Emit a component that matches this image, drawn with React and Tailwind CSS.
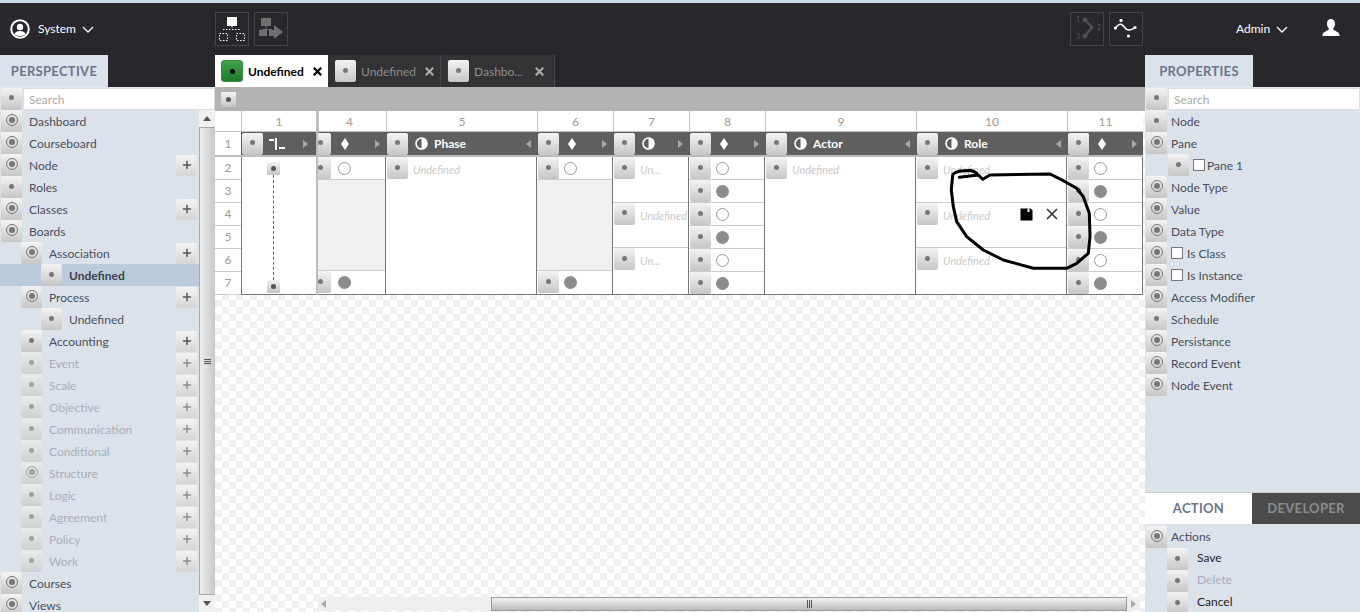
import { Plus } from "lucide-react";

const FONT = "font-['Lato','Noto_Sans',sans-serif]";

// small square button used all over the page
function Btn({ ring, small, green, className = "" }) {
  if (green) {
    return (
      <div className={`flex h-[22px] w-[22px] shrink-0 items-center justify-center rounded-[3px] border border-[#3c8a44] bg-gradient-to-b from-[#3fa34d] to-[#1f7a2e] ${className}`}>
        <div className="h-[5px] w-[5px] rounded-full bg-black" />
      </div>
    );
  }
  if (small) {
    return (
      <div className={`flex h-[13px] w-[13px] shrink-0 items-center justify-center rounded-[1px] bg-gradient-to-b from-[#f2f2f2] to-[#c4c4c4] ${className}`}>
        <div className="h-[5px] w-[5px] rounded-full bg-[#555]" />
      </div>
    );
  }
  return (
    <div className={`flex h-[22px] w-[21px] shrink-0 items-center justify-center rounded-[2px] bg-gradient-to-b from-[#f4f4f4] to-[#c6c6c6] ${className}`}>
      {ring ? (
        <div className="flex h-[12px] w-[12px] -translate-y-[1px] items-center justify-center rounded-full border border-[#777]">
          <div className="h-[6px] w-[6px] rounded-full bg-[#777]" />
        </div>
      ) : (
        <div className="h-[5px] w-[5px] -translate-y-[1px] rounded-full bg-[#777]" />
      )}
    </div>
  );
}

const perspective = [
  { label: "Dashboard", ring: true, level: 0 },
  { label: "Courseboard", ring: true, level: 0 },
  { label: "Node", ring: true, level: 0, plus: true },
  { label: "Roles", level: 0 },
  { label: "Classes", ring: true, level: 0, plus: true },
  { label: "Boards", ring: true, level: 0 },
  { label: "Association", ring: true, level: 1, plus: true },
  { label: "Undefined", level: 2, selected: true },
  { label: "Process", ring: true, level: 1, plus: true },
  { label: "Undefined", level: 2 },
  { label: "Accounting", level: 1, plus: true },
  { label: "Event", level: 1, plus: true, off: true },
  { label: "Scale", level: 1, plus: true, off: true },
  { label: "Objective", level: 1, plus: true, off: true },
  { label: "Communication", level: 1, plus: true, off: true },
  { label: "Conditional", level: 1, plus: true, off: true },
  { label: "Structure", ring: true, level: 1, plus: true, off: true },
  { label: "Logic", level: 1, plus: true, off: true },
  { label: "Agreement", level: 1, plus: true, off: true },
  { label: "Policy", level: 1, plus: true, off: true },
  { label: "Work", level: 1, plus: true, off: true },
  { label: "Courses", ring: true, level: 0 },
  { label: "Views", ring: true, level: 0 },
];

const properties = [
  { label: "Node" },
  { label: "Pane", ring: true },
  { label: "Pane 1", sub: true, check: true },
  { label: "Node Type", ring: true },
  { label: "Value", ring: true },
  { label: "Data Type", ring: true },
  { label: "Is Class", ring: true, check: true },
  { label: "Is Instance", ring: true, check: true },
  { label: "Access Modifier", ring: true },
  { label: "Schedule" },
  { label: "Persistance", ring: true },
  { label: "Record Event", ring: true },
  { label: "Node Event", ring: true },
];

const toggles = [
  { kind: "open", span: 1 },
  { kind: "filled", span: 1 },
  { kind: "open", span: 1 },
  { kind: "filled", span: 1 },
  { kind: "open", span: 1 },
  { kind: "filled", span: 1 },
];

const gapped = [
  { kind: "open", span: 1 },
  { kind: "grey", span: 4 },
  { kind: "filled", span: 1 },
];

const columns = [
  { n: "4", w: "w-[68px]", head: "diamond", cells: gapped, clip: true },
  { n: "5", w: "w-[151px]", head: "half", title: "Phase", cells: [{ kind: "text", span: 6, text: "Undefined" }] },
  { n: "6", w: "w-[76px]", head: "diamond", cells: gapped },
  {
    n: "7",
    w: "w-[76px]",
    head: "half",
    cells: [
      { kind: "text", span: 2, text: "Un..." },
      { kind: "text", span: 2, text: "Undefined" },
      { kind: "text", span: 2, text: "Un..." },
    ],
  },
  { n: "8", w: "w-[76px]", head: "diamond", cells: toggles },
  { n: "9", w: "w-[151px]", head: "half", title: "Actor", cells: [{ kind: "text", span: 6, text: "Undefined" }] },
  {
    n: "10",
    w: "w-[151px]",
    head: "half",
    title: "Role",
    cells: [
      { kind: "text", span: 2, text: "Undefined" },
      { kind: "text", span: 2, text: "Undefined", tools: true },
      { kind: "text", span: 2, text: "Undefined" },
    ],
  },
  { n: "11", w: "w-[76px]", head: "diamond", cells: toggles },
];

function Diamond() {
  return (
    <svg width="8" height="12" viewBox="0 0 8 12" className="shrink-0">
      <path d="M4 0 L8 6 L4 12 L0 6 Z" fill="#fff" />
    </svg>
  );
}

function HalfCircle() {
  return (
    <svg width="13" height="13" viewBox="0 0 13 13" className="shrink-0">
      <circle cx="6.5" cy="6.5" r="5.5" fill="#5f5f5f" stroke="#fff" strokeWidth="1.6" />
      <path d="M6.5 1 A5.5 5.5 0 0 1 6.5 12 Z" fill="#fff" />
    </svg>
  );
}

function Arrow({ left }) {
  return (
    <svg width="5" height="8" viewBox="0 0 5 8" className="shrink-0">
      <path d={left ? "M5 0 V8 L0 4 Z" : "M0 0 V8 L5 4 Z"} fill="#a8a8a8" />
    </svg>
  );
}

function SaveIcon() {
  return (
    <svg width="13" height="13" viewBox="0 0 13 13" className="shrink-0">
      <path d="M0.5 0.5 H10.5 L12.5 2.5 V12.5 H0.5 Z" fill="#000" />
      <rect x="7.5" y="0.5" width="2" height="3.5" fill="#fff" />
    </svg>
  );
}

function CloseIcon({ size = 12, weight = 1.6, className = "" }) {
  return (
    <svg width={size} height={size} viewBox="0 0 12 12" className={`shrink-0 ${className}`}>
      <path d="M1 1 L11 11 M11 1 L1 11" stroke="currentColor" strokeWidth={weight} fill="none" />
    </svg>
  );
}

function Cell({ cell, clip, last }) {
  const h = { 1: "h-[23px]", 2: "h-[46px]", 4: "h-[92px]", 6: "h-[138px]" }[cell.span];
  if (cell.kind === "grey") {
    return <div className={`${h} border-b border-[#ccc] bg-[#f0f0f0]`} />;
  }
  if (cell.kind === "text") {
    return (
      <div className={`${h} flex items-start ${last ? "" : "border-b border-[#ccc]"}`}>
        <Btn className="ml-[1px]" />
        <span className="ml-[5px] mt-[4px] text-[11px] italic leading-[18px] text-[#c9c9c9]">{cell.text}</span>
        {cell.tools && (
          <div className="ml-auto mr-[8px] mt-[5px] flex items-center gap-[13px]">
            <SaveIcon />
            <CloseIcon className="text-[#333]" />
          </div>
        )}
      </div>
    );
  }
  return (
    <div className={`${h} flex items-start ${last ? "" : "border-b border-[#ccc]"}`}>
      <Btn className={clip ? "-ml-[8px]" : "ml-[1px]"} />
      <div className={`${clip ? "ml-[7px]" : "ml-[5px]"} mt-[5px] h-[13px] w-[13px] rounded-full ${cell.kind === "open" ? "border border-[#999] bg-white" : "bg-[#8c8c8c]"}`} />
    </div>
  );
}

function Column({ col }) {
  const iconGap = col.head !== "diamond" ? "ml-[7px]" : col.clip ? "ml-[10px]" : "ml-[9px]";
  return (
    <div className={`${col.w} flex shrink-0 flex-col overflow-hidden`}>
      <div className={`flex h-[21px] items-center justify-center border-b border-l border-[#c4c4c4] bg-white pt-[2px] text-[12px] text-[#a09a90] ${col.clip ? "pr-[6px]" : ""}`}>
        {col.n}
      </div>
      <div className="flex h-[23px] items-center bg-[#5f5f5f] pr-[6px]">
        <Btn className={col.clip ? "-ml-[8px]" : "ml-[1px]"} />
        <div className={`flex items-center ${iconGap}`}>
          {col.head === "diamond" ? <Diamond /> : <HalfCircle />}
        </div>
        {col.title && <span className="ml-[6px] text-[12px] font-bold text-white">{col.title}</span>}
        <div className="ml-auto">
          <Arrow left={col.head === "half" && col.n !== "7"} />
        </div>
      </div>
      <div className="h-[2px] bg-[#bdbdbd]" />
      <div className="flex h-[138px] flex-col border-r border-b border-[#777] bg-white">
        {col.cells.map((c, i) => (
          <Cell key={i} cell={c} clip={col.clip} last={i === col.cells.length - 1} />
        ))}
      </div>
    </div>
  );
}

function SideRow({ item }) {
  const pad = { 0: "pl-[1px]", 1: "pl-[21px]", 2: "pl-[41px]" }[item.level];
  return (
    <div className={`flex h-[22px] items-center ${pad} pr-[2px] ${item.selected ? "bg-[#bccbdb]" : ""}`}>
      <Btn ring={item.ring} className={item.off ? "opacity-60" : ""} />
      <span className={`ml-[7px] pt-[2px] text-[12px] ${item.selected ? "font-bold text-[#3a3f4a]" : item.off ? "text-[#a9afb8]" : "text-[#4a4f5c]"}`}>
        {item.label}
      </span>
      {item.plus && (
        <div className="ml-auto flex h-[21px] w-[21px] items-center justify-center rounded-[2px] bg-gradient-to-b from-[#f4f4f4] to-[#d4d4d4]">
          <Plus size={12} strokeWidth={3} className={item.off ? "text-[#8a8f96]" : "text-[#555]"} />
        </div>
      )}
    </div>
  );
}

function PropRow({ item }) {
  return (
    <div className={`flex h-[22px] items-center ${item.sub ? "pl-[23px]" : "pl-[1px]"}`}>
      <Btn ring={item.ring} />
      {item.check && <div className="ml-[4px] h-[12px] w-[12px] border border-[#777] bg-white" />}
      <span className={`${item.check ? (item.sub ? "ml-[2px]" : "ml-[4px]") : "ml-[4px]"} pt-[2px] text-[12px] text-[#4a4f5c]`}>
        {item.label}
      </span>
    </div>
  );
}

function SearchRow() {
  return (
    <div className="flex h-[23px] items-center bg-[#e4e8ee] pl-[1px]">
      <Btn />
      <div className="ml-[1px] flex h-[22px] flex-1 items-center border border-[#ddd] bg-white pl-[5px] pt-[3px] text-[12px] text-[#aaa]">
        Search
      </div>
    </div>
  );
}

function OrgIcon() {
  return (
    <svg width="26" height="24" viewBox="0 0 26 24">
      <rect x="8" y="0" width="10" height="9" fill="#fff" />
      <path d="M13 9 V12 M4 12.5 H22" stroke="#fff" strokeDasharray="1.5 1.5" fill="none" />
      <rect x="0.5" y="16.5" width="8" height="7" fill="none" stroke="#fff" strokeDasharray="1.5 1.5" />
      <rect x="17.5" y="16.5" width="8" height="7" fill="none" stroke="#fff" strokeDasharray="1.5 1.5" />
    </svg>
  );
}

function FlowIcon() {
  return (
    <svg width="24" height="22" viewBox="0 0 24 22">
      <rect x="2" y="0" width="10" height="8" fill="#6f6f6f" />
      <path d="M7 8 V12 M3 11.5 H13" stroke="#6f6f6f" fill="none" />
      <rect x="0" y="12" width="8" height="6" fill="#6f6f6f" />
      <rect x="10" y="12" width="5" height="6" fill="#6f6f6f" />
      <path d="M15 7 L24 14 L15 21 Z" fill="#6f6f6f" />
    </svg>
  );
}

function NumberedIcon() {
  return (
    <svg width="30" height="28" viewBox="0 0 30 28">
      <path d="M13 5 L20 12 L13 21" stroke="#4e4e54" strokeWidth="2.5" fill="none" />
      <circle cx="13" cy="5" r="2.5" fill="#4e4e54" />
      <circle cx="13" cy="21" r="2.5" fill="#4e4e54" />
      <text x="4" y="7" fontSize="7" fill="#56565c">1</text>
      <text x="25" y="15" fontSize="7" fill="#56565c">2</text>
      <text x="4" y="24" fontSize="7" fill="#56565c">3</text>
    </svg>
  );
}

function WaveIcon() {
  return (
    <svg width="24" height="20" viewBox="0 0 24 20">
      <path d="M1.5 9 Q5 4.5 7.5 5.5 Q10 7 12 10 Q16 12.5 21 8.5" stroke="#fff" strokeWidth="1.5" fill="none" />
      <circle cx="1.5" cy="9" r="1.6" fill="#fff" />
      <circle cx="7" cy="1.5" r="1.6" fill="#fff" />
      <circle cx="21" cy="8.5" r="1.6" fill="#fff" />
      <circle cx="14.5" cy="17" r="1.6" fill="#fff" />
    </svg>
  );
}

function Chevron() {
  return (
    <svg width="12" height="7" viewBox="0 0 12 7">
      <path d="M1 1 L6 6 L11 1" stroke="#fff" strokeWidth="1.3" fill="none" />
    </svg>
  );
}

function ToolBox({ children }) {
  return <div className="flex h-[34px] w-[34px] items-center justify-center border border-[#444449]">{children}</div>;
}

function Tab({ active, label, w, xr }) {
  return (
    <div className={`${w} flex h-[32px] shrink-0 items-center ${active ? "bg-white pl-[6px]" : "border-r border-[#47474b] bg-[#333336] pl-[7px]"}`}>
      <Btn green={active} />
      <span className={`ml-[5px] pt-[2px] text-[12px] ${active ? "font-bold text-black" : "text-[#8c8c8c]"}`}>{label}</span>
      <CloseIcon size={9} weight={3} className={`ml-auto ${xr} ${active ? "text-black" : "text-[#aaa]"}`} />
    </div>
  );
}

export default function App() {
  return (
    <div className={`flex h-[612px] w-[1360px] flex-col overflow-hidden bg-[#28272c] ${FONT}`}>
      <div className="h-[3px] bg-[#c9dcec]" />

      {/* top bar */}
      <div className="flex h-[52px] items-center">
        <div className="flex w-[215px] items-center pl-[10px]">
          <svg width="20" height="20" viewBox="0 0 20 20">
            <circle cx="10" cy="10" r="8.8" stroke="#fff" strokeWidth="2" fill="none" />
            <circle cx="10" cy="8" r="3.2" fill="#fff" />
            <path d="M4.5 15.5 Q5 12 10 12 Q15 12 15.5 15.5 Q10 18.5 4.5 15.5 Z" fill="#fff" />
          </svg>
          <span className="ml-[8px] text-[12px] text-white">System</span>
          <div className="ml-[6px]"><Chevron /></div>
        </div>
        <div className="flex gap-[5px]">
          <ToolBox><OrgIcon /></ToolBox>
          <ToolBox><FlowIcon /></ToolBox>
        </div>
        <div className="ml-auto flex gap-[5px]">
          <ToolBox><NumberedIcon /></ToolBox>
          <ToolBox><WaveIcon /></ToolBox>
        </div>
        <div className="flex w-[217px] items-center pl-[93px]">
          <span className="text-[12px] text-white">Admin</span>
          <div className="ml-[6px]"><Chevron /></div>
          <svg width="18" height="18" viewBox="0 0 18 18" className="ml-auto mr-[20px] -translate-y-[1px]">
            <path d="M9 0 C6 0 5 2.5 5 5 C5 7.5 6.5 9 7 10 C6 12 1 12.5 0.5 15.5 L0.5 17 H17.5 V15.5 C17 12.5 12 12 11 10 C11.5 9 13 7.5 13 5 C13 2.5 12 0 9 0 Z" fill="#fff" />
          </svg>
        </div>
      </div>

      <div className="flex min-h-0 flex-1">
        {/* left panel */}
        <div className="flex w-[215px] shrink-0 flex-col">
          <div className="h-[32px] shrink-0">
            <div className="flex h-full w-[108px] items-center justify-center bg-[#dbe2ea] pt-[2px] text-[13px] font-bold tracking-[0.3px] text-[#6b7789]">
              PERSPECTIVE
            </div>
          </div>
          <SearchRow />
          <div className="flex min-h-0 flex-1 overflow-hidden">
            <div className="w-[199px] shrink-0 overflow-hidden bg-[#dbe2ea]">
              {perspective.map((p, i) => (
                <SideRow key={i} item={p} />
              ))}
            </div>
            <div className="flex w-[16px] shrink-0 flex-col items-center bg-[#f1f1f1]">
              <div className="flex h-[17px] items-center justify-center">
                <svg width="8" height="5" viewBox="0 0 8 5"><path d="M0 5 L4 0 L8 5 Z" fill="#555" /></svg>
              </div>
              <div className="flex w-full flex-1 items-center justify-center border-y border-l border-[#aaa] bg-gradient-to-r from-[#eeeeee] to-[#c8c8c8]">
                <div className="flex flex-col gap-[1px]">
                  <div className="h-px w-[7px] bg-[#555]" />
                  <div className="h-px w-[7px] bg-[#555]" />
                  <div className="h-px w-[7px] bg-[#555]" />
                </div>
              </div>
              <div className="flex h-[17px] items-center justify-center">
                <svg width="8" height="5" viewBox="0 0 8 5"><path d="M0 0 L4 5 L8 0 Z" fill="#555" /></svg>
              </div>
            </div>
          </div>
        </div>

        {/* centre */}
        <div className="flex min-w-0 flex-1 flex-col">
          <div className="flex h-[32px] shrink-0">
            <Tab active label="Undefined" w="w-[113px]" xr="mr-[6px]" />
            <Tab label="Undefined" w="w-[113px]" xr="mr-[6px]" />
            <Tab label="Dashbo..." w="w-[114px]" xr="mr-[10px]" />
          </div>
          <div className="flex h-[24px] shrink-0 items-center bg-[#b3b3b3] pl-[6px]">
            <Btn small className="h-[15px] w-[15px]" />
          </div>
          <div className="flex min-h-0 flex-1 flex-col bg-[repeating-conic-gradient(#f0f0f0_0_25%,#ffffff_0_50%)] bg-[length:14px_14px]">
            <div className="relative flex w-[928px] shrink-0">
              {/* row numbers */}
              <div className="flex w-[26px] shrink-0 flex-col bg-white text-[12px] text-[#a09a90]">
                <div className="h-[21px] border-b border-[#c4c4c4]" />
                <div className="flex h-[23px] items-center justify-center">1</div>
                <div className="h-[2px] bg-[#bdbdbd]" />
                {["2", "3", "4", "5", "6", "7"].map((n) => (
                  <div key={n} className="flex h-[23px] items-center justify-center border-b border-[#ccc]">
                    {n}
                  </div>
                ))}
              </div>

              {/* column 1, the tree */}
              <div className="flex w-[77px] shrink-0 flex-col border-r-2 border-[#bdbdbd]">
                <div className="flex h-[21px] items-center justify-center border-b border-l border-[#c4c4c4] bg-white pt-[2px] text-[12px] text-[#a09a90]">
                  1
                </div>
                <div className="flex h-[23px] items-center bg-[#5f5f5f] pr-[8px]">
                  <Btn className="ml-[1px]" />
                  <svg width="17" height="12" viewBox="0 0 17 12" className="ml-[6px]">
                    <rect x="0" y="1" width="5" height="2" fill="#fff" />
                    <rect x="6" y="0" width="2" height="12" fill="#fff" />
                    <rect x="10" y="9" width="6" height="2" fill="#fff" />
                  </svg>
                  <div className="ml-auto"><Arrow /></div>
                </div>
                <div className="h-[2px] bg-[#bdbdbd]" />
                <div className="flex h-[138px] flex-col items-start border-b border-l border-[#777] bg-white pb-[1px] pl-[25px] pt-[5px]">
                  <Btn small />
                  <div className="ml-[6px] flex-1 border-l border-dashed border-[#666]" />
                  <Btn small />
                </div>
              </div>

              {columns.map((c) => (
                <Column key={c.n} col={c} />
              ))}

              {/* hand drawn circle on top of the table */}
              <svg width="150" height="110" viewBox="945 166 150 110" className="pointer-events-none absolute left-[730px] top-[55px]">
                <path
                  d="M959.3 177.3 L978.3 175 L982.7 179.3 M978 175 Q975 171 970 170.5 L960 171 Q953 173 952.7 175 L951.3 190 L953.3 206.7 L956.7 221.7 L966.7 236.7 L983.3 250 L1003.3 260 L1033.3 268.3 L1066.7 268.3 L1076.7 263.3 L1088.3 253.3 L1090 236.7 L1089.3 213.3 L1083.3 196.7 L1076.7 188.3 L1063.3 180.7 L1050 174 L990 175 L982.7 179.3"
                  fill="none"
                  stroke="#000"
                  strokeWidth="3"
                  strokeLinejoin="round"
                  strokeLinecap="round"
                />
              </svg>
            </div>

            {/* horizontal scrollbar */}
            <div className="ml-[103px] mr-[5px] mt-auto mb-[1px] flex h-[14px] items-stretch bg-[#eeeeee]">
              <div className="flex w-[10px] items-center justify-center">
                <Arrow left />
              </div>
              <div className="w-[163px]" />
              <div className="flex w-[636px] items-center justify-center border border-[#999] bg-gradient-to-b from-[#f2f2f2] to-[#bcbcbc]">
                <div className="flex gap-[1px]">
                  <div className="h-[8px] w-px bg-[#555]" />
                  <div className="h-[8px] w-px bg-[#555]" />
                  <div className="h-[8px] w-px bg-[#555]" />
                </div>
              </div>
              <div className="flex flex-1 items-center justify-center">
                <Arrow />
              </div>
            </div>
          </div>
        </div>

        {/* right panel */}
        <div className="flex w-[215px] shrink-0 flex-col">
          <div className="h-[32px] shrink-0">
            <div className="flex h-full w-[108px] items-center justify-center bg-[#dbe2ea] pt-[2px] text-[13px] font-bold tracking-[0.3px] text-[#6b7789]">
              PROPERTIES
            </div>
          </div>
          <SearchRow />
          <div className="flex h-[382px] shrink-0 flex-col bg-[#dbe2ea]">
            {properties.map((p, i) => (
              <PropRow key={i} item={p} />
            ))}
          </div>
          <div className="flex h-[32px] shrink-0 border-t border-[#ccc] text-[13px] font-bold tracking-[0.3px]">
            <div className="flex w-[107px] items-center justify-center bg-white text-[#6b7789]">ACTION</div>
            <div className="flex flex-1 items-center justify-center bg-[#4b4b4b] text-[#8c8c8c]">DEVELOPER</div>
          </div>
          <div className="flex-1 overflow-hidden bg-[#dbe2ea] pt-[2px]">
            <div className="flex h-[22px] items-center pl-[1px]">
              <Btn ring />
              <span className="ml-[4px] text-[12px] text-[#4a4f5c]">Actions</span>
            </div>
            {[
              ["Save", "text-[#222]"],
              ["Delete", "text-[#a9afb8]"],
              ["Cancel", "text-[#222]"],
            ].map(([t, c]) => (
              <div key={t} className="flex h-[22px] items-center pl-[22px]">
                <Btn />
                <span className={`ml-[9px] pb-[2px] text-[12px] ${c}`}>{t}</span>
              </div>
            ))}
          </div>
        </div>
      </div>
    </div>
  );
}
